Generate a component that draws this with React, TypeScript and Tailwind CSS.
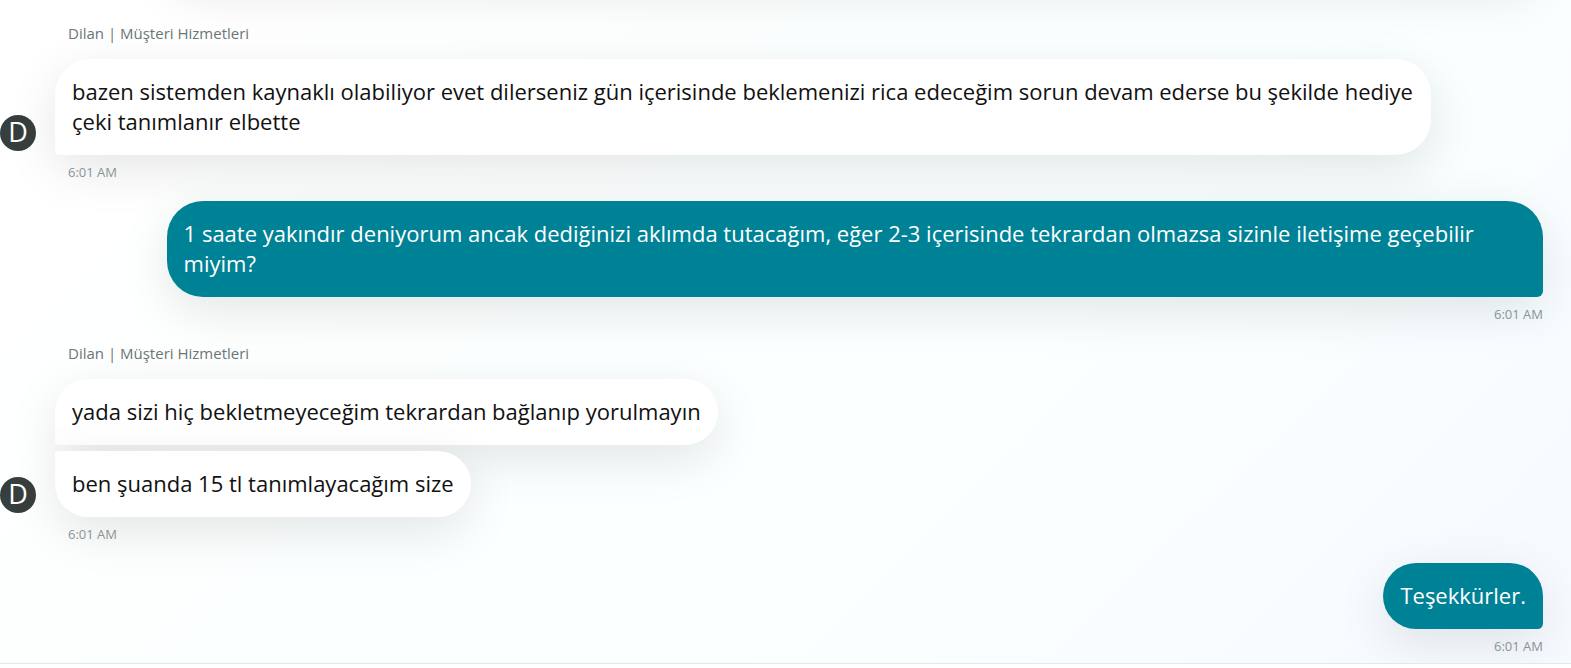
import React from 'react';
import clsx from 'clsx';

type MessageGroup = {
  id: number;
  from: 'agent' | 'customer';
  name?: string;
  time: string;
  messages: string[];
};

const groups: MessageGroup[] = [
  {
    id: 1,
    from: 'agent',
    name: 'Dilan | Müşteri Hizmetleri',
    time: '6:01 AM',
    messages: [
      'bazen sistemden kaynaklı olabiliyor evet dilerseniz gün içerisinde beklemenizi rica edeceğim sorun devam ederse bu şekilde hediye çeki tanımlanır elbette',
    ],
  },
  {
    id: 2,
    from: 'customer',
    time: '6:01 AM',
    messages: [
      '1 saate yakındır deniyorum ancak dediğinizi aklımda tutacağım, eğer 2-3 içerisinde tekrardan olmazsa sizinle iletişime geçebilir miyim?',
    ],
  },
  {
    id: 3,
    from: 'agent',
    name: 'Dilan | Müşteri Hizmetleri',
    time: '6:01 AM',
    messages: [
      'yada sizi hiç bekletmeyeceğim tekrardan bağlanıp yorulmayın',
      'ben şuanda 15 tl tanımlayacağım size',
    ],
  },
  {
    id: 4,
    from: 'customer',
    time: '6:01 AM',
    messages: ['Teşekkürler.'],
  },
];

const bubbleShadow = 'shadow-[0_14px_50px_rgba(0,0,0,0.1)]';

function Bubble({ text, from, first }: { text: string; from: MessageGroup['from']; first: boolean }) {
  return (
    <p
      className={clsx(
        'max-w-[92.5%] rounded-[36px] px-[17px] pt-[17px] pb-[19px] text-[22px] leading-[30px]',
        bubbleShadow,
        from === 'customer' && 'rounded-br-md bg-[#008296] text-white',
        from === 'agent' && 'bg-white text-[#111111]',
        from === 'agent' && (first ? 'rounded-bl-sm' : 'rounded-tl-sm'),
      )}
    >
      {text}
    </p>
  );
}

function AgentGroup({ group }: { group: MessageGroup }) {
  return (
    <section>
      <h2 className="mb-4 ml-[68px] text-[15px] leading-5 text-[#6c7778]">{group.name}</h2>
      <div className="flex items-end gap-[19px]">
        <div className="mb-1 flex size-9 shrink-0 items-center justify-center rounded-full bg-[#373f3e] pb-0.5 text-[27px] leading-8 text-white">
          D
        </div>
        <div className="flex min-w-0 flex-1 flex-col items-start gap-1.5">
          {group.messages.map((text, i) => (
            <Bubble key={text} text={text} from="agent" first={i === 0} />
          ))}
        </div>
      </div>
      <time className="mt-2 ml-[68px] block text-[13px] leading-[18px] text-[#879596]">{group.time}</time>
    </section>
  );
}

function CustomerGroup({ group }: { group: MessageGroup }) {
  return (
    <section className="ml-[55px] flex flex-col items-end">
      {group.messages.map((text) => (
        <Bubble key={text} text={text} from="customer" first />
      ))}
      <time className="mt-2 block text-[13px] leading-[18px] text-[#879596]">{group.time}</time>
    </section>
  );
}

export default function App() {
  return (
    <div className="flex h-screen flex-col overflow-hidden bg-white font-['Open_Sans','Noto_Sans',sans-serif]">
      <main className="flex min-h-0 flex-1 flex-col justify-end gap-5 overflow-hidden bg-linear-135 from-white from-10% via-[#f9ffff] via-70% to-[#f7fbff] to-90% pr-7 pb-2">
        {/* earlier message, scrolled out above the list */}
        <div aria-hidden="true" className="mb-6 ml-[55px] flex justify-end">
          <div className={clsx('h-24 w-[92.5%] shrink-0 rounded-[36px]', bubbleShadow)} />
        </div>
        {groups.map((group) =>
          group.from === 'agent' ? (
            <AgentGroup key={group.id} group={group} />
          ) : (
            <CustomerGroup key={group.id} group={group} />
          ),
        )}
      </main>
      <footer className="h-[5px] border-t border-[#e3e8ea] bg-white" />
    </div>
  );
}
